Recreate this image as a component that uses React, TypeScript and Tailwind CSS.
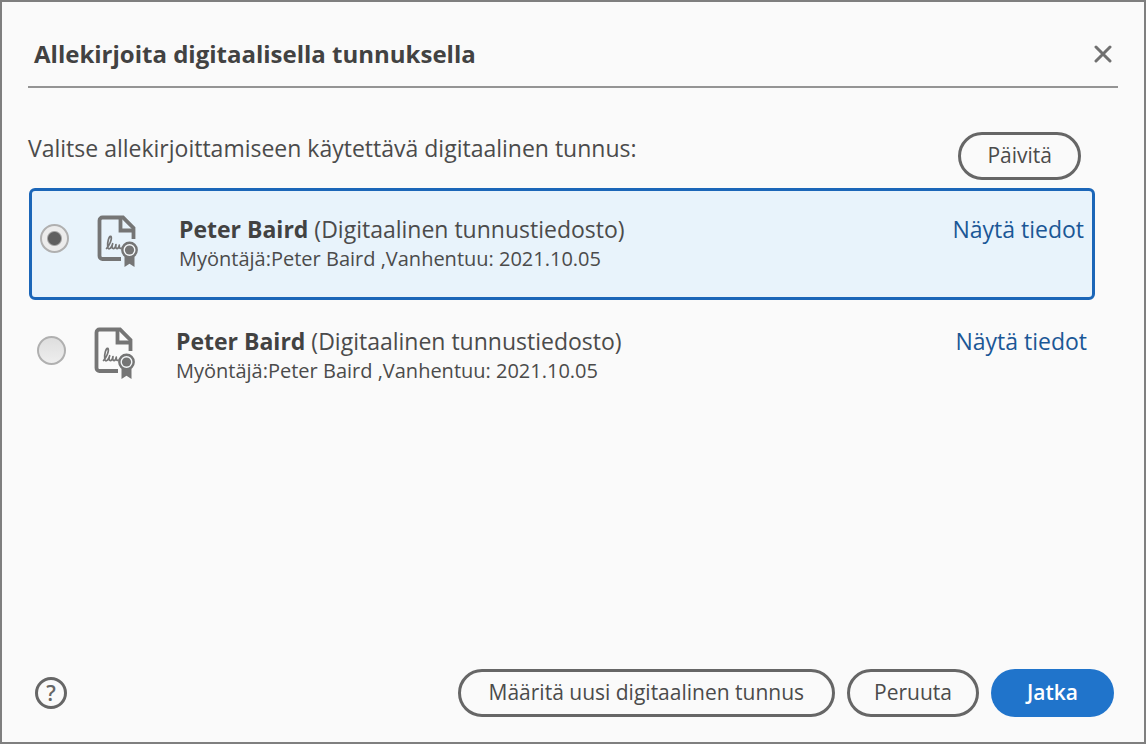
import { useState } from "react";
import clsx from "clsx";

interface DigitalId {
  id: string;
  name: string;
  kind: string;
  issuer: string;
  expires: string;
}

const digitalIds: DigitalId[] = [
  { id: "id-1", name: "Peter Baird", kind: "Digitaalinen tunnustiedosto", issuer: "Peter Baird", expires: "2021.10.05" },
  { id: "id-2", name: "Peter Baird", kind: "Digitaalinen tunnustiedosto", issuer: "Peter Baird", expires: "2021.10.05" },
];

const outlineButton =
  "h-12 rounded-full border-3 border-[#666666] pb-0.5 text-[21px] leading-7 text-[#4b4b4b] hover:bg-gray-100";

function CertificateIcon() {
  return (
    <svg width="42" height="54" viewBox="0 0 42 54" fill="none" aria-hidden="true" className="shrink-0">
      <path
        d="M24 44H5.500a3 3 0 0 1-3-3V5.500a3 3 0 0 1 3-3H26L36.500 13v11"
        stroke="#757575"
        strokeWidth="3.800"
      />
      <path d="M23.500 3v12.500H36" stroke="#757575" strokeWidth="3.800" />
      <path
        d="M9.500 33.500c3-3 5.800-9.500 4.500-12-1.800-1.500-4 6-3.300 10.500.4 2.800 2.800 2 3.800-.3l1.200-3c-.9 2.300-1 5 .6 5 1.500 0 2.400-2.500 2.700-4-.5 2.300-.2 4 1 4s2-2 2.300-3.500c-.2 2.500.3 3.500 1.700 3"
        stroke="#757575"
        strokeWidth="1.700"
        strokeLinecap="round"
        strokeLinejoin="round"
      />
      <path d="M27.500 41v11l5-3.300 5 3.300V41z" fill="#757575" />
      <circle cx="32.500" cy="35" r="7.200" fill="#f4f7f9" stroke="#757575" strokeWidth="2.400" />
      <circle cx="32.500" cy="35" r="4.600" fill="#757575" />
    </svg>
  );
}

function CloseIcon() {
  return (
    <svg width="18" height="18" viewBox="0 0 18 18" fill="none" aria-hidden="true">
      <path d="M2 2l14 14M16 2L2 16" stroke="#707070" strokeWidth="3" strokeLinecap="round" />
    </svg>
  );
}

interface IdRowProps {
  item: DigitalId;
  selected: boolean;
  onSelect: () => void;
}

function IdRow({ item, selected, onSelect }: IdRowProps) {
  return (
    <li
      className={clsx(
        "flex h-28 items-start",
        selected ? "rounded-md border-3 border-[#1b66b8] bg-[#e8f3fb]" : "border-y-3 border-transparent"
      )}
    >
      <label htmlFor={item.id} className="flex flex-1 cursor-pointer items-start pl-2">
        <input
          id={item.id}
          type="radio"
          name="digital-id"
          checked={selected}
          onChange={onSelect}
          className={clsx(
            "mt-[33px] size-[29px] shrink-0 appearance-none rounded-full border-2 border-[#b0b0b0]",
            selected
              ? "bg-[radial-gradient(circle,#606060_6px,#ececec_8px)]"
              : "bg-linear-to-b from-[#dedede] to-[#eeeeee]"
          )}
        />
        <span className="mt-6 ml-7">
          <CertificateIcon />
        </span>
        <span className="mt-[22px] ml-10 flex flex-col text-[#4b4b4b]">
          <span className="text-[23px] leading-8">
            <b className="font-bold text-[#424242]">{item.name}</b> ({item.kind})
          </span>
          <span className="text-[20px] leading-7">
            Myöntäjä:{item.issuer} ,Vanhentuu: {item.expires}
          </span>
        </span>
      </label>
      <a href="#" className="mt-[22px] mr-2 text-[23px] leading-8 text-[#1a5796] hover:underline">
        Näytä tiedot
      </a>
    </li>
  );
}

export default function App() {
  const [selectedId, setSelectedId] = useState("id-1");

  return (
    <main className="flex min-h-screen flex-col border-2 border-[#7f7f7f] bg-[#fafafa] px-[26px] pb-[25px] font-['Open_Sans',sans-serif]">
      <header className="flex items-center justify-between border-b-2 border-[#949494] pt-9 pr-1 pb-4 pl-1.5">
        <h1 className="text-[24px] leading-8 font-bold text-[#424242]">Allekirjoita digitaalisella tunnuksella</h1>
        <button type="button" aria-label="Sulje" className="p-0.5">
          <CloseIcon />
        </button>
      </header>

      <section className="pt-11 pr-[23px]">
        <div className="flex items-start justify-between pr-[14px]">
          <h2 id="id-list" className="text-[23px] leading-8 text-[#4b4b4b]">
            Valitse allekirjoittamiseen käytettävä digitaalinen tunnus:
          </h2>
          <button type="button" className={clsx(outlineButton, "px-[26px]")}>
            Päivitä
          </button>
        </div>
        <ul aria-labelledby="id-list" className="mt-2 ml-px">
          {digitalIds.map((item) => (
            <IdRow
              key={item.id}
              item={item}
              selected={item.id === selectedId}
              onSelect={() => setSelectedId(item.id)}
            />
          ))}
        </ul>
      </section>

      <footer className="mt-auto flex items-center justify-between pr-1 pl-[7px]">
        <button
          type="button"
          aria-label="Ohje"
          className="flex size-8 items-center justify-center rounded-full border-3 border-[#666666] text-[21px] leading-6 font-semibold text-[#666666]"
        >
          ?
        </button>
        <div className="flex gap-3">
          <button type="button" className={clsx(outlineButton, "px-7")}>
            Määritä uusi digitaalinen tunnus
          </button>
          <button type="button" className={clsx(outlineButton, "px-6")}>
            Peruuta
          </button>
          <button
            type="button"
            className="h-12 rounded-full bg-[#2074cb] px-9 pb-0.5 text-[21px] leading-7 font-semibold text-white hover:bg-[#1b66b8]"
          >
            Jatka
          </button>
        </div>
      </footer>
    </main>
  );
}
